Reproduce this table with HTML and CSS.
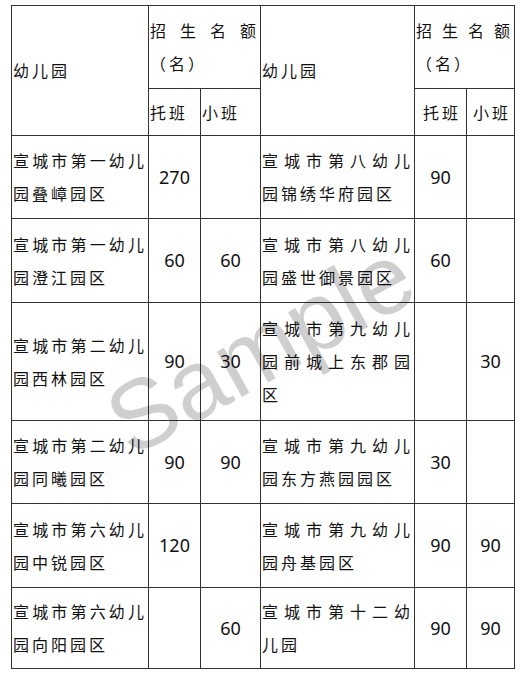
FILE: index.html
```html
<!DOCTYPE html>
<html lang="zh-CN">
<head>
<meta charset="utf-8">
<title>招生名额</title>
<link rel="stylesheet" href="styles.css">
</head>
<body>
<div class="sheet">
  <table class="quota">
    <colgroup>
      <col class="c-name"><col class="c-num"><col class="c-num2">
      <col class="c-name2"><col class="c-num"><col class="c-num3">
    </colgroup>
    <tr class="h1">
      <td rowspan="2" class="name head">幼儿园</td>
      <td colspan="2" class="title">招生名额（名）</td>
      <td rowspan="2" class="name head">幼儿园</td>
      <td colspan="2" class="title">招生名额（名）</td>
    </tr>
    <tr class="h2">
      <td class="sub">托班</td>
      <td class="sub">小班</td>
      <td class="sub mid">托班</td>
      <td class="sub mid">小班</td>
    </tr>
    <tr class="r1">
      <td class="name">宣城市第一幼儿园叠嶂园区</td>
      <td class="num">270</td>
      <td class="num"></td>
      <td class="name">宣城市第八幼儿园锦绣华府园区</td>
      <td class="num">90</td>
      <td class="num"></td>
    </tr>
    <tr class="r2">
      <td class="name">宣城市第一幼儿园澄江园区</td>
      <td class="num">60</td>
      <td class="num">60</td>
      <td class="name">宣城市第八幼儿园盛世御景园区</td>
      <td class="num">60</td>
      <td class="num"></td>
    </tr>
    <tr class="r3">
      <td class="name">宣城市第二幼儿园西林园区</td>
      <td class="num">90</td>
      <td class="num">30</td>
      <td class="name">宣城市第九幼儿园前城上东郡园区</td>
      <td class="num"></td>
      <td class="num">30</td>
    </tr>
    <tr class="r4">
      <td class="name">宣城市第二幼儿园同曦园区</td>
      <td class="num">90</td>
      <td class="num">90</td>
      <td class="name">宣城市第九幼儿园东方燕园园区</td>
      <td class="num">30</td>
      <td class="num"></td>
    </tr>
    <tr class="r5">
      <td class="name">宣城市第六幼儿园中锐园区</td>
      <td class="num">120</td>
      <td class="num"></td>
      <td class="name">宣城市第九幼儿园舟基园区</td>
      <td class="num">90</td>
      <td class="num">90</td>
    </tr>
    <tr class="r6">
      <td class="name">宣城市第六幼儿园向阳园区</td>
      <td class="num"></td>
      <td class="num">60</td>
      <td class="name">宣城市第十二幼儿园</td>
      <td class="num">90</td>
      <td class="num">90</td>
    </tr>
  </table>
  <div class="watermark">Sample</div>
</div>
</body>
</html>
```
FILE: styles.css
```css
html, body {
  margin: 0;
  padding: 0;
  background: #ffffff;
}

.sheet {
  position: relative;
  width: 503px;
  margin: 5px 0 0 11px;
}

.quota {
  border-collapse: collapse;
  table-layout: fixed;
  width: 503px;
  font-family: "Noto Sans CJK SC", "Noto Sans", sans-serif;
  color: #111;
}

.c-name { width: 137px; }
.c-num { width: 52px; }
.c-num2 { width: 60px; }
.c-name2 { width: 154px; }
.c-num3 { width: 48px; }

.quota td {
  border: 1px solid #333;
  padding: 0 1px;
  vertical-align: middle;
  font-size: 16px;
  line-height: 33px;
  letter-spacing: 3px;
  text-align: left;
}

.quota td.name,
.quota td.title {
  text-align: justify;
}

.quota td.head {
  text-align: left;
}

.quota td.mid {
  text-align: center;
  padding-left: 4px;
}

.quota td.num {
  text-align: center;
  font-family: "Noto Sans", sans-serif;
  font-size: 18px;
  letter-spacing: 0;
}

.h1 { height: 83px; }
.h2 { height: 47px; }
.r1 { height: 83px; }
.r2 { height: 84px; }
.r3 { height: 118px; }
.r4 { height: 83px; }
.r5 { height: 84px; }
.r6 { height: 81px; }

.watermark {
  position: absolute;
  left: 249px;
  top: 343px;
  transform: translate(-50%, -50%) rotate(-29deg);
  font-family: "Liberation Sans", Arial, sans-serif;
  font-size: 98px;
  line-height: 1;
  color: rgba(0, 0, 0, 0.19);
  pointer-events: none;
  white-space: nowrap;
}
```
